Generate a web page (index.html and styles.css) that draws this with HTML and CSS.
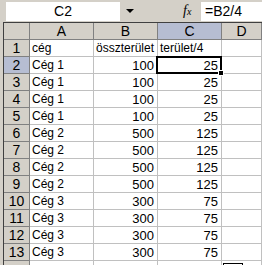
FILE: index.html
```html
<!doctype html>
<html>
	<head>
		<title>Munka1</title>
		<meta charset="utf-8"/>
		<link rel="stylesheet" href="styles.css">
	</head>
	<body>
		<div class="bar">
			<div class="namebox">C2</div>
			<div class="drop"><span class="arrow"></span></div>
			<div class="fx">f<sub>x</sub></div>
			<div class="formula">=B2/4</div>
		</div>

		<div class="sheet">
			<div class="hd corner"></div><div class="hd">A</div><div class="hd">B</div><div class="hd sel">C</div><div class="hd">D</div>

			<div class="hd">1</div><div class="c">cég</div><div class="c">összterület</div><div class="c">terület/4</div><div class="c"></div>
			<div class="hd sel">2</div><div class="c">Cég 1</div><div class="c n">100</div><div class="c n active">25<span class="handle"></span></div><div class="c"></div>
			<div class="hd">3</div><div class="c">Cég 1</div><div class="c n">100</div><div class="c n">25</div><div class="c"></div>
			<div class="hd">4</div><div class="c">Cég 1</div><div class="c n">100</div><div class="c n">25</div><div class="c"></div>
			<div class="hd">5</div><div class="c">Cég 1</div><div class="c n">100</div><div class="c n">25</div><div class="c"></div>
			<div class="hd">6</div><div class="c">Cég 2</div><div class="c n">500</div><div class="c n">125</div><div class="c"></div>
			<div class="hd">7</div><div class="c">Cég 2</div><div class="c n">500</div><div class="c n">125</div><div class="c"></div>
			<div class="hd">8</div><div class="c">Cég 2</div><div class="c n">500</div><div class="c n">125</div><div class="c"></div>
			<div class="hd">9</div><div class="c">Cég 2</div><div class="c n">500</div><div class="c n">125</div><div class="c"></div>
			<div class="hd">10</div><div class="c">Cég 3</div><div class="c n">300</div><div class="c n">75</div><div class="c"></div>
			<div class="hd">11</div><div class="c">Cég 3</div><div class="c n">300</div><div class="c n">75</div><div class="c"></div>
			<div class="hd">12</div><div class="c">Cég 3</div><div class="c n">300</div><div class="c n">75</div><div class="c"></div>
			<div class="hd">13</div><div class="c">Cég 3</div><div class="c n">300</div><div class="c n">75</div><div class="c"></div>
			<div class="hd"></div><div class="c"></div><div class="c"></div><div class="c"></div><div class="c"></div>
		</div>

		<div class="smarttag"></div>
	</body>
</html>
```

FILE: styles.css
```css
*{
	padding:0;margin:0;
	box-sizing:border-box;
}

body{
	width:262px;
	height:265px;
	overflow:hidden;
	background:#d4d0c8;
	font-family:"Liberation Sans", Arial, sans-serif;
	position:relative;
}

/* formula bar */
.bar{
	height:22px;
	display:flex;
	align-items:center;
}
.namebox{
	margin-left:6px;
	width:114px;
	height:19px;
	background:#fff;
	text-align:center;
	font-size:14px;
	line-height:19px;
}
.drop{
	width:19px;
	height:19px;
	display:flex;
	justify-content:center;
	align-items:center;
}
.arrow{
	border-left:4px solid transparent;
	border-right:4px solid transparent;
	border-top:4px solid #000;
}
.fx{
	margin-left:44px;
	width:16px;
	font-family:"Liberation Serif", serif;
	font-style:italic;
	font-size:14px;
	line-height:19px;
}
.fx sub{
	font-size:10px;
	vertical-align:0;
}
.formula{
	margin-left:2px;
	flex:1;
	height:19px;
	background:#fff;
	padding-left:4px;
	font-size:14px;
	line-height:19px;
}

/* sheet grid */
.sheet{
	margin-left:3px;
	border-left:1px solid #404040;
	border-top:1px solid #404040;
	display:grid;
	grid-template-columns:26px 64px 64px 64px 1fr;
	grid-auto-rows:17px;
	background:#fff;
}

.c{
	border-right:1px solid #c0c0c0;
	border-bottom:1px solid #c0c0c0;
	padding:0 2px;
	font-size:12px;
	line-height:17px;
	white-space:nowrap;
	position:relative;
}
.n{
	text-align:right;
	padding-right:3px;
	font-size:13px;
}

.hd{
	background:#d4d0c8;
	border-right:1px solid #808080;
	border-bottom:1px solid #808080;
	text-align:center;
	font-size:14px;
	line-height:17px;
}
.hd.sel{
	background:#b6bdd2;
}

.active::after{
	content:"";
	position:absolute;
	left:-2px;top:-1px;right:-1px;bottom:-1px;
	border:2px solid #000;
}
.handle{
	position:absolute;
	right:-3px;
	bottom:-3px;
	width:6px;
	height:6px;
	background:#000;
	border:1px solid #fff;
	z-index:1;
}

.smarttag{
	position:absolute;
	left:223px;
	top:263px;
	width:20px;
	height:10px;
	border:1px solid #000;
	background:#fff;
}
```
